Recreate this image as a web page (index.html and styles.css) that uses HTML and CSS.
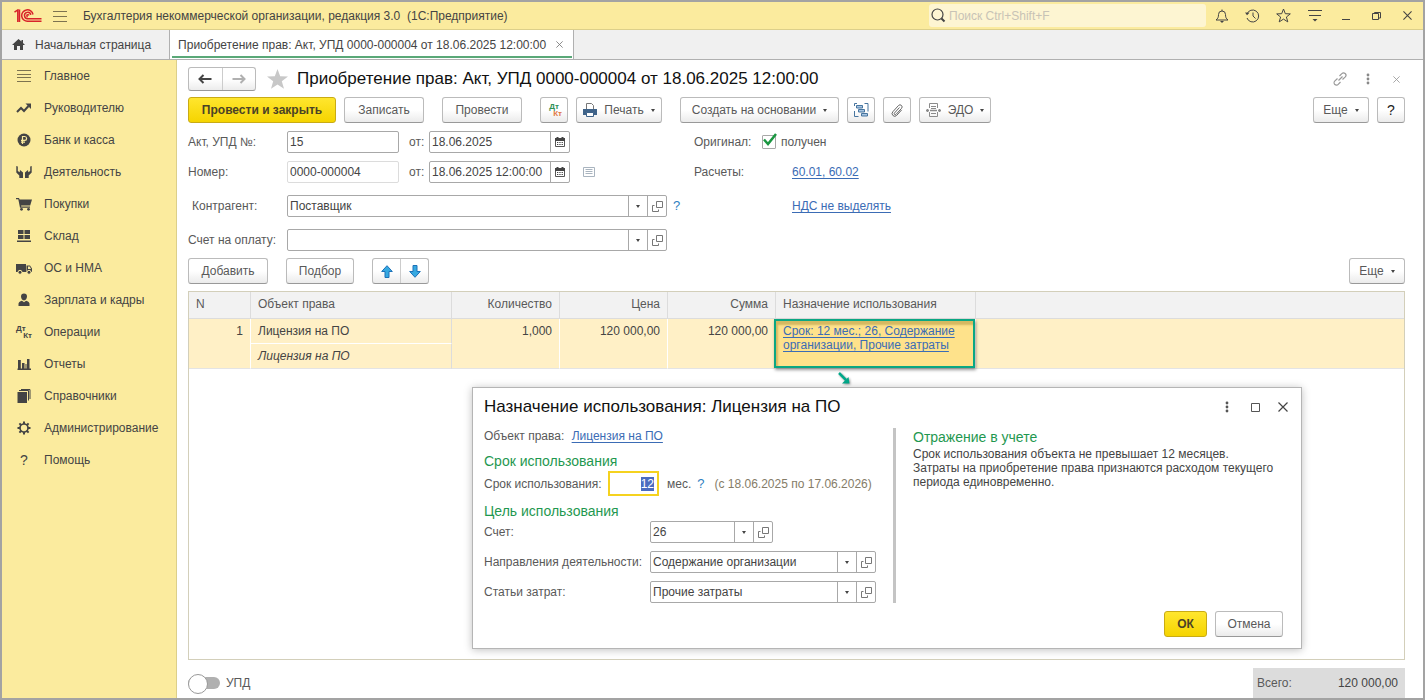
FILE: index.html
```
<!DOCTYPE html>
<html lang="ru">
<head>
    <meta charset="UTF-8">
    <title>Бухгалтерия некоммерческой организации</title>
    <link rel="stylesheet" href="styles.css">
</head>
<body>
    <svg class="sprite" aria-hidden="true">
        <symbol id="i-open" viewBox="0 0 11 11"><path d="M4.500.5h6v6h-6zM2.500 4.500h-2v6h6v-2" fill="none" stroke="#777"/></symbol>
        <symbol id="i-calendar" viewBox="0 0 10 10"><path d="M.5 2.500h9v7h-9z" fill="#fff" stroke="#555"/><path d="M0 1h10v3H0z" fill="#444"/><path d="M2.500 0v2M7.500 0v2" stroke="#444" stroke-width="2"/><path d="M2 5.500h6M2 7.500h6" stroke="#444" stroke-dasharray="1.300 1"/></symbol>
        <symbol id="i-dots" viewBox="0 0 4 12"><circle cx="2" cy="2" r="1.400"/><circle cx="2" cy="6" r="1.400"/><circle cx="2" cy="10" r="1.400"/></symbol>
        <symbol id="i-close" viewBox="0 0 10 10"><path d="M.5.5l9 9M9.500.5l-9 9" fill="none" stroke="currentColor" stroke-width="1.200"/></symbol>
    </svg>

    <header class="titlebar">
        <svg class="logo" width="28" height="14" viewBox="0 0 28 14" fill="none" stroke="#d8232a" stroke-width="1.500"><path d="M.5 3.200L3.800 1v12M5.500.5V13"/><path d="M19 5.500A5.700 5.700 0 1 0 14 12.200h13.500"/><path d="M16.800 5.800A3.200 3.200 0 1 0 14 9.700h13.500"/><path d="M14.800 6.500a1 1 0 1 0-1 1.200"/></svg>
        <button class="menu-btn" aria-label="Меню"><svg width="14" height="12" stroke="#7d7350"><path d="M0 1.500h14M0 6.500h14M0 11.500h14"/></svg></button>
        <div class="app-title">Бухгалтерия некоммерческой организации, редакция 3.0&nbsp; (1С:Предприятие)</div>
        <div class="search">
            <svg width="15" height="15" viewBox="0 0 15 15" fill="none" stroke="#444"><circle cx="6.500" cy="6.500" r="5.500" stroke-width="1.200"/><path d="M10.500 10.500l3 3" stroke-width="2"/></svg>
            <input type="search" placeholder="Поиск Ctrl+Shift+F" aria-label="Поиск">
        </div>
        <div class="window-tools">
            <button aria-label="Уведомления"><svg width="14" height="14" viewBox="0 0 14 14" fill="none" stroke="#444"><path d="M1 11c2-1.500 2.500-3 2.500-5.500a3.500 3.500 0 0 1 7 0C10.500 8 11 9.500 13 11zM7 2V.5"/><path d="M5 12h4l-2 2z" fill="#444" stroke="none"/></svg></button>
            <button aria-label="История"><svg width="15" height="14" viewBox="0 0 15 14" fill="none" stroke="#444"><path d="M2 5a6 6 0 1 1 0 4M8 3.500V7l2.500 2.500"/><path d="M0 3.500l2 2.800 2.500-2.500z" fill="#444" stroke="none"/></svg></button>
            <button aria-label="Избранное"><svg width="15" height="15" viewBox="0 0 15 15" fill="none" stroke="#444"><path d="M7.500 1l1.800 4.700 5 .2-3.900 3.100 1.400 4.900-4.300-2.800-4.300 2.800L4.600 9 .7 5.900l5-.2z"/></svg></button>
            <button aria-label="Настройки"><svg width="14" height="13" viewBox="0 0 14 13" stroke="#444"><path d="M0 1.500h14M1 6.500h12"/><path d="M4.500 10h5L7 12.500z" fill="#444" stroke="none"/></svg></button>
            <button aria-label="Свернуть"><svg width="8" height="9" stroke="#444"><path d="M0 8.500h8"/></svg></button>
            <button aria-label="Развернуть"><svg width="9" height="8" viewBox="0 0 9 8" fill="none" stroke="#444"><path d="M.5 1.500h6v6h-6zM2.500 1.500v-1h6v5.500h-2"/></svg></button>
            <button aria-label="Закрыть"><svg width="9" height="9"><use href="#i-close"/></svg></button>
        </div>
    </header>

    <nav class="tabs">
        <a class="tab" href="#"><svg width="13" height="11" viewBox="0 0 13 11" fill="#444"><path d="M6.500 0L0 6h2v5h3V7h3v4h3V6h2l-2-2V1H9.500v1.600z"/></svg>Начальная страница</a>
        <a class="tab active" href="#">Приобретение прав: Акт, УПД 0000-000004 от 18.06.2025 12:00:00<svg width="7" height="7"><use href="#i-close"/></svg></a>
    </nav>

    <div class="workspace">
        <nav class="sidebar">
            <a href="#"><svg viewBox="0 0 16 16" stroke="#7d7350"><path d="M1 2.500h14M1 6.500h14M1 9.500h14M1 13.500h14"/></svg>Главное</a>
            <a href="#"><svg viewBox="0 0 16 16"><path d="M1 12l4-4 3 3 4.500-5" fill="none" stroke="#444" stroke-width="2"/><path d="M9.500 3.500H15V9z"/></svg>Руководителю</a>
            <a href="#"><svg viewBox="0 0 16 16"><circle cx="8" cy="8" r="6.500"/><path d="M6.500 12V4.500h2.200a1.900 1.900 0 0 1 0 3.800H5M5 10.200h4" fill="none" stroke="#fbeb9e" stroke-width="1.200"/></svg>Банк и касса</a>
            <a href="#"><svg viewBox="0 0 16 16"><path d="M.3 2l1.500.5v4.500l1.900 1.200.3-2.200 3 2.500V14H3.300v-2.500L.3 8.500zM15.700 2l-1.500.5v4.500l-1.900 1.200-.3-2.200-3 2.500V14h3.700v-2.500l3-3z"/></svg>Деятельность</a>
            <a href="#"><svg viewBox="0 0 16 16"><path d="M0 2h3l.6 1.500H16l-1.800 6H5.200v1H14v1.200H4L2.300 3.300H0z"/><circle cx="5.500" cy="13.300" r="1.400"/><circle cx="12.500" cy="13.300" r="1.400"/></svg>Покупки</a>
            <a href="#"><svg viewBox="0 0 16 16"><path d="M2 2h5.500v4H2zM8.500 2H14v4H8.500zM2 7h5.500v4H2zM8.500 7H14v4H8.500zM1 12.500h14V14H1z"/></svg>Склад</a>
            <a href="#"><svg viewBox="0 0 16 16"><path d="M0 4h10v8H0zM10.500 5.500H14l2 3V12h-5.500z"/><path d="M12 6.500h1.700L15 9h-3z" fill="#fbeb9e"/><circle cx="4" cy="12.300" r="2" stroke="#fbeb9e"/><circle cx="13" cy="12.300" r="2" stroke="#fbeb9e"/></svg>ОС и НМА</a>
            <a href="#"><svg viewBox="0 0 16 16"><path d="M8 1.500c2 0 3 1.300 3 3S9.800 8.500 8 8.500 5 6.200 5 4.500s1-3 3-3zM2.500 14v-2.500C3 9.800 5 9 6 8.800l2 1.400 2-1.400c1 .2 3 1 3.500 2.700V14z"/></svg>Зарплата и кадры</a>
            <a href="#"><span class="dtkt"><b>Дт</b><b>Кт</b></span>Операции</a>
            <a href="#"><svg viewBox="0 0 16 16"><path d="M2 4h2.800v9H2zM6 7h2.500v6H6zM9.500 8h1v5h-1zM11 3h2.500v10H11zM1.500 12.500H15V14H1.500z"/></svg>Отчеты</a>
            <a href="#"><svg viewBox="0 0 16 16"><path d="M1.500 4H11v11H1.500z"/><path d="M3 2.500h9.500v10M5 1.500h9v9.500" fill="none" stroke="#444"/></svg>Справочники</a>
            <a href="#"><svg viewBox="0 0 16 16" fill="none" stroke="#444"><circle cx="8" cy="8" r="4" stroke-width="1.700"/><path d="M8 1.500V4M8 12v2.500M1.500 8H4M12 8h2.500M3.400 3.400l1.800 1.800M10.800 10.800l1.800 1.800M3.400 12.600l1.800-1.800M10.800 5.200l1.800-1.800" stroke-width="2"/></svg>Администрирование</a>
            <a href="#"><span class="question">?</span>Помощь</a>
        </nav>

        <main class="document">
            <div class="doc-head">
                <div class="btn-pair">
                    <button aria-label="Назад"><svg width="14" height="10" viewBox="0 0 14 10" fill="none" stroke="#444" stroke-width="2"><path d="M13.500 5H2M5.500 1L1.500 5l4 4"/></svg></button>
                    <button aria-label="Вперед"><svg width="14" height="10" viewBox="0 0 14 10" fill="none" stroke="#b0b0b0" stroke-width="2"><path d="M.5 5H12M8.500 1l4 4-4 4"/></svg></button>
                </div>
                <svg class="fav" width="21" height="20" viewBox="0 0 21 20" fill="#c8c8c8"><path d="M10.500 0l2.700 7.200 7.800.3-6.200 4.700 2.200 7.600-6.500-4.400L4 19.800l2.200-7.600L0 7.500l7.800-.3z"/></svg>
                <h1>Приобретение прав: Акт, УПД 0000-000004 от 18.06.2025 12:00:00</h1>
                <div class="head-tools">
                    <button aria-label="Ссылка"><svg width="14" height="14" viewBox="0 0 14 14" fill="none" stroke="#999" stroke-width="1.200"><path d="M5.500 8.500l4-4M6.500 4l2.300-2.300a2.200 2.200 0 0 1 3.500 3.200L9.500 7.500M7.500 10l-2.300 2.300a2.200 2.200 0 0 1-3.500-3.200l2.800-2.600"/></svg></button>
                    <button aria-label="Еще действия"><svg width="4" height="12" fill="#888"><use href="#i-dots"/></svg></button>
                    <button aria-label="Закрыть"><svg width="7" height="7"><use href="#i-close"/></svg></button>
                </div>
            </div>

            <div class="toolbar">
                <div class="group">
                    <button class="btn primary w-post">Провести и закрыть</button>
                    <button class="btn w-text">Записать</button>
                </div>
                <button class="btn w-text">Провести</button>
                <div class="group">
                    <button class="btn icon" aria-label="Дт Кт"><span class="dtkt colored"><b>Дт</b><b>Кт</b></span></button>
                    <button class="btn w-print"><svg width="14" height="14" viewBox="0 0 14 14"><path d="M3.500 6V.5h5l2 2V6" fill="#fff" stroke="#777"/><path d="M0 6h14v6H0z" fill="#3f6389"/><path d="M3.500 9.500h7v4h-7z" fill="#fff" stroke="#3f6389"/></svg>Печать<span class="caret"></span></button>
                </div>
                <div class="group">
                    <button class="btn w-create">Создать на основании<span class="caret"></span></button>
                    <button class="btn icon" aria-label="Структура подчиненности"><svg width="15" height="15" viewBox="0 0 15 15" fill="#a9c6e3" stroke="#47759f"><path d="M2.500 2.500h6v2.500h-6zM4.500 6.500h6v2.500h-6zM7.500 10.500h6v2.500h-6z"/><path d="M3 .5H.5V3M.5 8v5.500h4M10.500.5h3.500v8" fill="none"/></svg></button>
                    <button class="btn icon" aria-label="Файлы"><svg width="12" height="13" viewBox="0 0 12 13" fill="none" stroke="#666"><path d="M8.500 3.500l-5 5.500a1 1 0 0 0 1.500 1.400l5.500-6A2 2 0 0 0 7.500 1.500L1.800 7.800a2.600 2.600 0 0 0 3.900 3.600l5-5.500"/></svg></button>
                    <button class="btn w-edo"><svg width="15" height="14" viewBox="0 0 15 14" fill="none" stroke="#8b8b8b"><path d="M3.500 5V.5h8V5M3.500 9v4.500h8V9M5 3.500h5M5 5.500h5M5 10.500h5"/><path d="M0 7.500h3M4 7.500h7M12 7.500h3M1.500 6v3M13.500 6v3" stroke-width="1.500"/></svg>ЭДО<span class="caret"></span></button>
                </div>
                <div class="group right">
                    <button class="btn w-more">Еще<span class="caret"></span></button>
                    <button class="btn icon help">?</button>
                </div>
            </div>

            <div class="form">
                <label for="act">Акт, УПД №:</label>
                <div class="fields">
                    <input class="field short" id="act" value="15">
                    <label class="from" for="act-date">от:</label>
                    <div class="combo date"><input id="act-date" value="18.06.2025"><button aria-label="Выбрать дату"><svg width="10" height="10"><use href="#i-calendar"/></svg></button></div>
                </div>
                <div class="side">
                    <label for="original">Оригинал:</label>
                    <label class="check"><input type="checkbox" id="original" checked><svg width="14" height="14" viewBox="0 0 14 14" fill="none" stroke="#1a9641" stroke-width="2.500"><path d="M1 6.500l4 4.500L13 1"/></svg>получен</label>
                </div>

                <label for="number">Номер:</label>
                <div class="fields">
                    <input class="field short pale" id="number" value="0000-000004">
                    <label class="from" for="doc-date">от:</label>
                    <div class="combo date"><input id="doc-date" value="18.06.2025 12:00:00"><button aria-label="Выбрать дату"><svg width="10" height="10"><use href="#i-calendar"/></svg></button></div>
                    <svg class="list-icon" width="12" height="10" viewBox="0 0 12 10" fill="#fff" stroke="#a9b4bf"><path d="M.5.500h11v9H.5z"/><path d="M2.500 2.500h7M2.500 4.500h7M2.500 6.500h7"/></svg>
                </div>
                <div class="side wide"><span>Расчеты:</span><a href="#">60.01, 60.02</a></div>

                <label class="indent" for="partner">Контрагент:</label>
                <div class="fields">
                    <div class="combo long"><input id="partner" value="Поставщик"><button aria-label="Выбрать"><span class="caret"></span></button><button aria-label="Открыть"><svg width="11" height="11"><use href="#i-open"/></svg></button></div>
                    <a class="hint" href="#">?</a>
                </div>
                <div class="side wide"><span></span><a href="#">НДС не выделять</a></div>

                <label for="invoice">Счет на оплату:</label>
                <div class="fields">
                    <div class="combo long"><input id="invoice" value=""><button aria-label="Выбрать"><span class="caret"></span></button><button aria-label="Открыть"><svg width="11" height="11"><use href="#i-open"/></svg></button></div>
                </div>
            </div>

            <div class="toolbar table-tools">
                <button class="btn w-text">Добавить</button>
                <button class="btn w-pick">Подбор</button>
                <div class="btn-pair arrows">
                    <button aria-label="Вверх"><svg width="12" height="13" viewBox="0 0 12 13" fill="#36a9e1" stroke="#1d71b8"><path d="M6 .7L.7 6.500H4v6h4v-6h3.300z"/></svg></button>
                    <button aria-label="Вниз"><svg width="12" height="13" viewBox="0 0 12 13" fill="#36a9e1" stroke="#1d71b8"><path d="M6 12.300L.7 6.500H4v-6h4v6h3.300z"/></svg></button>
                </div>
                <button class="btn w-more right">Еще<span class="caret"></span></button>
            </div>

            <div class="grid-box">
                <table>
                    <colgroup><col class="c-n"><col class="c-obj"><col class="c-num"><col class="c-num"><col class="c-num"><col class="c-use"><col></colgroup>
                    <thead>
                        <tr><th>N</th><th>Объект права</th><th class="num">Количество</th><th class="num">Цена</th><th class="num">Сумма</th><th>Назначение использования</th><th></th></tr>
                    </thead>
                    <tbody>
                        <tr>
                            <td class="num" rowspan="2">1</td>
                            <td class="main">Лицензия на ПО</td>
                            <td class="num" rowspan="2">1,000</td>
                            <td class="num" rowspan="2">120 000,00</td>
                            <td class="num" rowspan="2">120 000,00</td>
                            <td class="usage" rowspan="2"><a href="#">Срок: 12 мес.; 26, Содержание организации, Прочие затраты</a></td>
                            <td rowspan="2"></td>
                        </tr>
                        <tr><td class="sub">Лицензия на ПО</td></tr>
                    </tbody>
                </table>

                <svg class="pointer" width="13" height="13" viewBox="0 0 13 13"><path d="M1 1l7 7" stroke="#00a88a" stroke-width="2.500"/><path d="M11.500 11.500H4L10.500 5z" fill="#00a88a"/></svg>

                <section class="dialog" role="dialog" aria-labelledby="dlg-title">
                    <div class="dialog-head">
                        <h2 id="dlg-title">Назначение использования: Лицензия на ПО</h2>
                        <button aria-label="Еще действия"><svg width="4" height="12" fill="#555"><use href="#i-dots"/></svg></button>
                        <button aria-label="Развернуть"><svg width="9" height="9" fill="none" stroke="#555"><path d="M.5.500h8v8h-8z"/></svg></button>
                        <button aria-label="Закрыть"><svg width="10" height="10"><use href="#i-close"/></svg></button>
                    </div>
                    <div class="dialog-body">
                        <div class="dialog-form">
                            <p class="object">Объект права: <a href="#">Лицензия на ПО</a></p>
                            <h3>Срок использования</h3>
                            <div class="term">
                                <label for="months">Срок использования:</label>
                                <input id="months" value="12">
                                <span>мес.</span>
                                <a class="hint" href="#">?</a>
                                <span class="period">(с 18.06.2025 по 17.06.2026)</span>
                            </div>
                            <h3>Цель использования</h3>
                            <div class="purpose">
                                <label for="account">Счет:</label>
                                <div class="combo account"><input id="account" value="26"><button aria-label="Выбрать"><span class="caret"></span></button><button aria-label="Открыть"><svg width="11" height="11"><use href="#i-open"/></svg></button></div>
                                <label for="activity">Направления деятельности:</label>
                                <div class="combo"><input id="activity" value="Содержание организации"><button aria-label="Выбрать"><span class="caret"></span></button><button aria-label="Открыть"><svg width="11" height="11"><use href="#i-open"/></svg></button></div>
                                <label for="costs">Статьи затрат:</label>
                                <div class="combo"><input id="costs" value="Прочие затраты"><button aria-label="Выбрать"><span class="caret"></span></button><button aria-label="Открыть"><svg width="11" height="11"><use href="#i-open"/></svg></button></div>
                            </div>
                        </div>
                        <div class="dialog-info">
                            <h3>Отражение в учете</h3>
                            <p>Срок использования объекта не превышает 12 месяцев.<br>Затраты на приобретение права признаются расходом текущего периода единовременно.</p>
                        </div>
                    </div>
                    <div class="dialog-foot">
                        <button class="btn primary w-ok">ОК</button>
                        <button class="btn w-cancel">Отмена</button>
                    </div>
                </section>
            </div>

            <footer class="doc-foot">
                <label class="switch"><input type="checkbox" role="switch">УПД</label>
                <div class="total"><span>Всего:</span><output>120 000,00</output></div>
            </footer>
        </main>
    </div>

    <script>
        // put the cursor in the term field, value selected
        document.getElementById('months').select();
    </script>
</body>
</html>
```
FILE: styles.css
```
:root {
    --yellow: #fbeb9e;
    --yellow-line: #dccf8a;
    --frame: #a3a3a3;
    --text: #444;
    --label: #595959;
    --link: #3b6cb5;
    --green: #1f9850;
    --border: #a8a8a8;
}

* {
    margin: 0;
    padding: 0;
    box-sizing: border-box;
}

body {
    display: flex;
    flex-direction: column;
    min-height: 100vh;
    border: 2px solid var(--frame);
    background: #fff;
    color: var(--text);
    font-family: "Liberation Sans", Arial, sans-serif;
    font-size: 12px;
    line-height: 14px;
}

button,
input {
    font: inherit;
    color: inherit;
}

button {
    display: flex;
    align-items: center;
    justify-content: center;
    border: none;
    background: none;
    cursor: pointer;
}

input {
    min-width: 0;
    outline: none;
}

a {
    color: var(--link);
    text-underline-offset: 2px;
}

svg {
    flex: none;
}

.sprite {
    position: absolute;
    width: 0;
    height: 0;
}

/* Title bar */
.titlebar {
    display: flex;
    align-items: center;
    height: 28px;
    background: var(--yellow);
    border-bottom: 1px solid var(--yellow-line);
}

.logo {
    margin-left: 12px;
}

.menu-btn {
    width: 14px;
    margin: 0 16px 0 11px;
}

.app-title {
    flex: 1;
    white-space: nowrap;
}

.search {
    display: flex;
    align-items: center;
    gap: 3px;
    width: 277px;
    height: 23px;
    padding: 0 2px;
    border-radius: 3px;
    background: #fdf5d2;
}

.search input {
    flex: 1;
    border: none;
    background: none;
}

.search input::placeholder {
    color: #c8c3b6;
}

.window-tools {
    display: flex;
}

.window-tools button {
    width: 31px;
    height: 26px;
}

/* Tabs */
.tabs {
    display: flex;
    height: 30px;
    background: #f0f0f0;
    border-bottom: 1px solid #b0b0b0;
}

.tab {
    display: flex;
    align-items: center;
    gap: 10px;
    padding: 0 18px 0 10px;
    border-right: 1px solid #b0b0b0;
    color: var(--text);
    text-decoration: none;
    white-space: nowrap;
}

.tab.active {
    position: relative;
    padding: 0 10px 0 8px;
    background: #fff;
}

.tab.active svg {
    color: #777;
}

.tab.active::after {
    content: "";
    position: absolute;
    left: 2px;
    right: 1px;
    bottom: 1px;
    height: 2px;
    background: #5aa878;
}

.workspace {
    display: flex;
    flex: 1;
}

/* Sidebar */
.sidebar {
    flex: none;
    width: 175px;
    background: var(--yellow);
    border-right: 1px solid var(--yellow-line);
}

.sidebar a {
    display: flex;
    align-items: center;
    gap: 12px;
    height: 32px;
    padding-left: 14px;
    color: var(--text);
    text-decoration: none;
}

.sidebar svg {
    width: 16px;
    height: 16px;
    fill: #444;
}

.sidebar svg[fill="none"] {
    fill: none;
}

.dtkt {
    display: flex;
    flex-direction: column;
    width: 16px;
    font-size: 8px;
    line-height: 7px;
}

.dtkt b:last-child {
    align-self: flex-end;
}

.dtkt.colored b:first-child {
    color: #2e9156;
}

.dtkt.colored b:last-child {
    color: #e07a45;
}

.question {
    width: 16px;
    text-align: center;
    font-size: 14px;
}

/* Document */
.document {
    display: flex;
    flex-direction: column;
    flex: 1;
    min-width: 0;
    padding: 7px 18px 0 11px;
}

.doc-head {
    display: flex;
    align-items: center;
    height: 24px;
}

.btn-pair {
    display: flex;
    width: 68px;
    height: 24px;
    border: 1px solid #bbb;
    border-bottom-color: #999;
    border-radius: 3px;
    background: linear-gradient(#fff 50%, #ececec);
}

.btn-pair button {
    flex: 1;
}

.btn-pair button + button {
    border-left: 1px solid #ccc;
}

.fav {
    margin: 0 9px 0 11px;
}

h1,
h2 {
    flex: 1;
    color: #111;
    font-size: 17px;
    font-weight: 400;
    line-height: 20px;
    white-space: nowrap;
}

.head-tools {
    display: flex;
    margin-right: -5px;
    color: #999;
}

.head-tools button {
    width: 28px;
    height: 20px;
}

.toolbar {
    display: flex;
    align-items: center;
    gap: 18px;
    margin-top: 6px;
}

.group {
    display: flex;
    gap: 8px;
}

.right {
    margin-left: auto;
}

.btn {
    height: 26px;
    border: 1px solid #bbb;
    border-bottom-color: #999;
    border-radius: 3px;
    background: linear-gradient(#fff 50%, #ebebeb);
    color: var(--label);
    white-space: nowrap;
}

.btn.primary {
    border-color: #c9ab14;
    background: linear-gradient(#ffe62e, #f5d400);
    color: #4a4226;
    font-weight: 700;
}

.btn svg {
    margin-right: 7px;
}

.btn .caret {
    margin-left: 7px;
}

.btn.icon {
    width: 28px;
}

.btn.icon svg {
    margin: 0;
}

.btn.help {
    color: #222;
    font-size: 14px;
}

.w-post { width: 148px; }
.w-text { width: 80px; }
.w-print { width: 86px; }
.w-create { width: 159px; }
.w-edo { width: 72px; }
.w-more { width: 56px; }
.w-pick { width: 68px; }
.w-ok { width: 43px; }
.w-cancel { width: 68px; }

.caret {
    border: 2px solid transparent;
    border-top: 3px solid #444;
    border-bottom: none;
}

/* Form */
.form {
    display: grid;
    grid-template-columns: 99px 407px 1fr;
    grid-template-rows: 30px 34px 34px 29px;
    align-items: start;
    margin-top: 8px;
    color: var(--label);
    line-height: 22px;
}

.indent {
    padding-left: 4px;
}

.fields,
.side {
    display: flex;
    align-items: center;
    height: 22px;
}

.side label:first-child {
    width: 68px;
}

.wide span {
    width: 98px;
}

.field,
.combo {
    height: 22px;
    border: 1px solid var(--border);
    border-radius: 2px;
    background: #fff;
    color: var(--text);
}

.field {
    padding: 0 2px;
}

.field.pale {
    border-color: #dcdcdc;
}

.short {
    width: 112px;
}

.from {
    width: 30px;
    padding-left: 10px;
}

.combo {
    display: flex;
}

.combo input {
    flex: 1;
    padding: 0 2px;
    border: none;
    background: none;
}

.combo button {
    flex: none;
    width: 19px;
    border-left: 1px solid var(--border);
}

.combo.date {
    width: 141px;
}

.combo.long {
    width: 380px;
}

.list-icon {
    margin-left: 13px;
}

.hint {
    margin-left: 6px;
    color: #2f7fc1;
    font-size: 13px;
    text-decoration: none;
}

.check {
    display: flex;
    align-items: center;
    gap: 5px;
    position: relative;
}

.check input {
    appearance: none;
    width: 14px;
    height: 14px;
    border: 1px solid var(--border);
    border-radius: 1px;
}

.check svg {
    position: absolute;
    left: 1px;
    top: 2px;
    visibility: hidden;
}

.check input:checked + svg {
    visibility: visible;
}

.table-tools {
    margin-top: 0;
}

.arrows {
    width: 57px;
    height: 26px;
}

/* Table */
.grid-box {
    flex: 1;
    position: relative;
    min-height: 368px;
    margin-top: 7px;
    border: 1px solid #d3cfba;
}

table {
    width: 100%;
    table-layout: fixed;
    border-collapse: separate;
    border-spacing: 0;
}

.c-n { width: 62px; }
.c-obj { width: 201px; }
.c-num { width: 108px; }
.c-use { width: 200px; }

th,
td {
    padding: 0 7px;
    text-align: left;
    font-weight: 400;
}

th {
    height: 27px;
    padding-bottom: 2px;
    background: #f2f2f2;
    border-right: 1px solid #dcdcdc;
    border-bottom: 1px solid #dcdcdc;
    color: var(--label);
}

td {
    height: 25px;
    padding-top: 5px;
    background: #fff0c6;
    border-right: 1px solid #fff;
    border-bottom: 1px solid #e4e4e4;
    vertical-align: top;
}

th:last-child,
td:last-child {
    border-right: none;
}

td.main {
    border-right-color: #dcdcdc;
    border-bottom-color: #fff;
}

td.sub {
    border-right: 1px solid #dcdcdc;
    font-style: italic;
}

th.num,
td.num {
    text-align: right;
}

td.usage {
    position: relative;
    background: #fee28b;
}

td.usage::after {
    content: "";
    position: absolute;
    inset: 0 0 0 -2px;
    border: 2px solid #0aa783;
    box-shadow: 1px 2px 3px rgba(0, 0, 0, 0.4), inset 2px 4px 2px rgba(120, 90, 0, 0.3);
    pointer-events: none;
}

.pointer {
    position: absolute;
    left: 649px;
    top: 80px;
    filter: drop-shadow(1px 1px 1px rgba(0, 0, 0, 0.4));
}

/* Dialog */
.dialog {
    position: absolute;
    left: 283px;
    right: 102px;
    top: 95px;
    padding: 9px 18px 11px 11px;
    border: 1px solid #b5b5b5;
    background: #fff;
    box-shadow: 0 1px 8px rgba(0, 0, 0, 0.25);
}

.dialog-head {
    display: flex;
    align-items: center;
    margin-right: -14px;
}

.dialog-head button {
    width: 28px;
    height: 20px;
}

.dialog-body {
    display: flex;
    margin-top: 11px;
}

.dialog-form {
    flex: none;
    width: 412px;
    padding-right: 17px;
    border-right: 3px solid #c4c4c4;
    color: var(--label);
}

.dialog-info {
    flex: 1;
    padding-left: 17px;
}

h3 {
    color: var(--green);
    font-size: 14px;
    font-weight: 400;
    line-height: 19px;
}

.object {
    margin-bottom: 8px;
    line-height: 16px;
}

.object a {
    margin-left: 4px;
}

.term {
    display: flex;
    align-items: center;
    height: 25px;
    margin-bottom: 6px;
    white-space: nowrap;
}

.term label {
    width: 124px;
}

.term input {
    width: 51px;
    height: 25px;
    margin-right: 8px;
    padding: 0 3px;
    border: 2px solid #f5d21f;
    text-align: right;
}

.term input::selection {
    background: #4b6cc0;
    color: #fff;
}

.period {
    margin-left: 10px;
    color: #857c68;
}

.purpose {
    display: grid;
    grid-template-columns: 166px 1fr;
    row-gap: 8px;
    align-items: center;
    white-space: nowrap;
}

.combo.account {
    width: 123px;
}

.dialog-foot {
    display: flex;
    justify-content: flex-end;
    gap: 8px;
    margin-top: 8px;
}

/* Footer */
.doc-foot {
    display: flex;
    align-items: center;
    justify-content: space-between;
    height: 30px;
    margin-top: 8px;
    color: var(--label);
}

.switch {
    display: flex;
    align-items: center;
    gap: 6px;
}

.switch input {
    appearance: none;
    width: 32px;
    height: 12px;
    border-radius: 6px;
    background: #b0b0b0;
}

.switch input::before {
    content: "";
    display: block;
    width: 18px;
    height: 18px;
    margin-top: -3px;
    border: 1px solid #999;
    border-radius: 50%;
    background: #fff;
}

.switch input:checked::before {
    margin-left: 14px;
}

.total {
    display: flex;
    align-items: center;
    justify-content: space-between;
    width: 152px;
    height: 30px;
    padding: 0 7px 0 4px;
    background: #dcdcdc;
}

.total output {
    color: var(--text);
}
```
